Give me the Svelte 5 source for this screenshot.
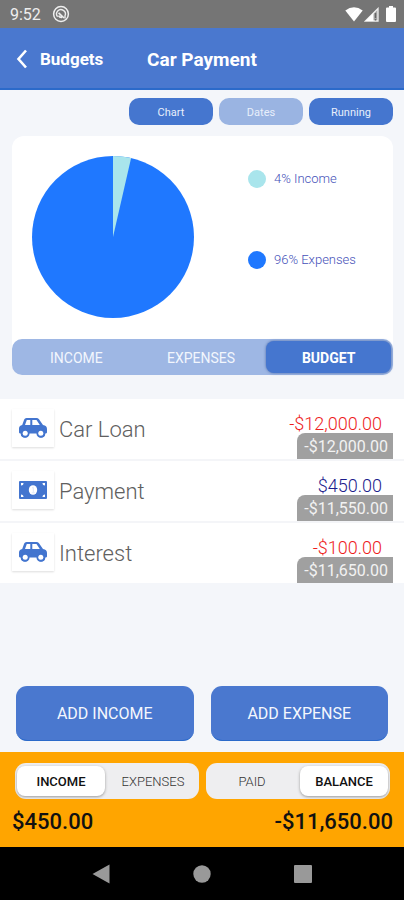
<script lang="ts">
	type Entry = { name: string; icon: 'car' | 'cash'; amount: number; running: number };

	const entries: Entry[] = [
		{ name: 'Car Loan', icon: 'car', amount: -12000, running: -12000 },
		{ name: 'Payment', icon: 'cash', amount: 450, running: -11550 },
		{ name: 'Interest', icon: 'car', amount: -100, running: -11650 }
	];

	const tabs = ['Income', 'Expenses', 'Budget'];
	const totalTabs = ['Income', 'Expenses'];
	const balanceTabs = ['Paid', 'Balance'];

	let showChart = $state(true);
	let showDates = $state(false);
	let showRunning = $state(true);
	let tab = $state('Budget');
	let totalTab = $state('Income');
	let balanceTab = $state('Balance');

	const income = 450;
	const expenses = 12100;
	const share = income / (income + expenses);
	const incomePct = Math.round(share * 100);

	// end of the income slice on the circle
	const angle = share * Math.PI * 2;
	const sliceX = 81 + 81 * Math.sin(angle);
	const sliceY = 81 - 81 * Math.cos(angle);

	let total = $derived(totalTab === 'Income' ? income : -expenses);
	let balance = $derived(balanceTab === 'Balance' ? income - expenses : 0);

	function money(value: number) {
		const text = Math.abs(value).toLocaleString('en-US', { minimumFractionDigits: 2 });
		return (value < 0 ? '-$' : '$') + text;
	}
</script>

<div class="screen">
	<div class="status">
		<span>9:52</span>
		<svg width="18" height="18" viewBox="0 0 18 18" fill="none" stroke="#eee">
			<circle cx="9" cy="9" r="7.4" stroke-width="1.5" />
			<path d="M5.6 11.8A4.4 4.4 0 1 1 13 10.8L13 13.5" stroke-width="1.4" />
			<path d="M6.6 7.8L12 13M6.6 10.6Q7.5 12.6 10 12.4" stroke-width="1.7" />
		</svg>
		<div class="signals">
			<svg width="18" height="15" viewBox="0 0 18 15">
				<path d="M0.3 3.5Q9-3 17.7 3.5L9 14.5Z" fill="#fff" />
			</svg>
			<svg width="15" height="15" viewBox="0 0 15 15">
				<path d="M14 1.5V14H1.5Z" fill="#a5a5a5" stroke="#eee" stroke-width="1.3" />
				<path d="M9.5 6V14H1.5Z" fill="#fff" />
				<path d="M11.5 6V11M11.5 12V13.4" stroke="#666" stroke-width="1.3" />
			</svg>
			<svg class="battery" width="10" height="16" viewBox="0 0 10 16">
				<path d="M3 0H7V1.6H9Q10 1.6 10 2.6V15Q10 16 9 16H1Q0 16 0 15V2.6Q0 1.6 1 1.6H3Z" fill="#fff" />
			</svg>
		</div>
	</div>

	<header>
		<a href="#budgets">
			<svg width="12" height="20" viewBox="0 0 12 20" fill="none" stroke="#fff" stroke-width="2.6">
				<path d="M10 1.5L2.5 10L10 18.5" />
			</svg>
			Budgets
		</a>
		<h1>Car Payment</h1>
	</header>

	<main>
		<div class="toggles">
			<button class:off={!showChart} aria-pressed={showChart} onclick={() => (showChart = !showChart)}>Chart</button>
			<button class:off={!showDates} aria-pressed={showDates} onclick={() => (showDates = !showDates)}>Dates</button>
			<button class:off={!showRunning} aria-pressed={showRunning} onclick={() => (showRunning = !showRunning)}>Running</button>
		</div>

		<section class="card">
			{#if showChart}
				<div class="chart">
					<svg width="162" height="162" viewBox="0 0 162 162">
						<circle cx="81" cy="81" r="81" fill="#1f78ff" />
						<path d="M81 81V0A81 81 0 0 1 {sliceX} {sliceY}Z" fill="#a9e5ec" />
					</svg>
					<ul>
						<li><i class="dot income"></i>{incomePct}% Income</li>
						<li><i class="dot"></i>{100 - incomePct}% Expenses</li>
					</ul>
				</div>
			{/if}
			<div class="tabs">
				{#each tabs as name}
					<button class:active={tab === name} onclick={() => (tab = name)}>{name}</button>
				{/each}
			</div>
		</section>

		<ul class="entries">
			{#each entries as entry}
				<li>
					<span class="icon">
						{#if entry.icon === 'car'}
							<svg width="28" height="20" viewBox="0 0 28 20">
								<path
									fill="#4375cf"
									fill-rule="evenodd"
									d="M7.5 0H17.5Q19 0 20 1.3L24 7Q28 7.5 28 11V14.5Q28 15.5 26.3 15.5A4 4 0 0 1 18.3 15.5H9.7A4 4 0 0 1 1.7 15.5Q0 15.5 0 14.5V10.5Q0 7.5 3.2 7L5.2 1.5Q5.8 0 7.5 0ZM7.8 2L6 7H11.3V2ZM13.3 2V7H20.8L17.5 2Z"
								/>
								<circle cx="6.2" cy="15.5" r="4.3" fill="#4375cf" />
								<circle cx="21.8" cy="15.5" r="4.3" fill="#4375cf" />
								<circle cx="6.2" cy="15.3" r="2.5" fill="#fff" />
								<circle cx="21.8" cy="15.3" r="2.5" fill="#fff" />
							</svg>
						{:else}
							<svg width="28" height="18" viewBox="0 0 28 18">
								<rect width="28" height="18" rx="1" fill="#4375cf" />
								<ellipse cx="14" cy="9" rx="4.2" ry="4.8" fill="#fff" />
								<path
									fill="#fff"
									d="M2 2H4.5A2.5 2.5 0 0 1 2 4.5ZM26 2H23.5A2.5 2.5 0 0 0 26 4.5ZM2 16H4.5A2.5 2.5 0 0 0 2 13.5ZM26 16H23.5A2.5 2.5 0 0 1 26 13.5Z"
								/>
								<path d="M13 7L14.3 6.3V11.5M12.7 11.8H15.8" fill="none" stroke="#dfe8f8" />
							</svg>
						{/if}
					</span>
					<span class="name">{entry.name}</span>
					<span class="amounts">
						<span class="amount" class:negative={entry.amount < 0}>{money(entry.amount)}</span>
						{#if showRunning}
							<span class="running">{money(entry.running)}</span>
						{/if}
					</span>
				</li>
			{/each}
		</ul>
	</main>

	<div class="actions">
		<button>ADD INCOME</button>
		<button>ADD EXPENSE</button>
	</div>

	<footer>
		<div class="switches">
			<div class="switch">
				{#each totalTabs as name}
					<button class:active={totalTab === name} onclick={() => (totalTab = name)}>{name}</button>
				{/each}
			</div>
			<div class="switch">
				{#each balanceTabs as name}
					<button class:active={balanceTab === name} onclick={() => (balanceTab = name)}>{name}</button>
				{/each}
			</div>
		</div>
		<div class="totals">
			<span>{money(total)}</span>
			<span>{money(balance)}</span>
		</div>
	</footer>

	<nav>
		<button aria-label="Back">
			<svg width="18" height="20" viewBox="0 0 18 20"><path d="M17.5 0.5V19.5L0.5 10Z" fill="#999" /></svg>
		</button>
		<button aria-label="Home">
			<svg width="18" height="18" viewBox="0 0 18 18"><circle cx="9" cy="9" r="8.7" fill="#999" /></svg>
		</button>
		<button aria-label="Recent apps">
			<svg width="18" height="18" viewBox="0 0 18 18"><rect width="18" height="18" rx="1" fill="#999" /></svg>
		</button>
	</nav>
</div>

<style>
	:global(body) {
		margin: 0;
		background: #f4f6fa;
	}

	.screen {
		display: flex;
		flex-direction: column;
		min-height: 100vh;
		font-family: Roboto, 'Liberation Sans', sans-serif;
	}

	button {
		padding: 0;
		border: 0;
		background: none;
		font-family: inherit;
		cursor: pointer;
	}

	ul {
		list-style: none;
		margin: 0;
		padding: 0;
	}

	svg {
		display: block;
	}

	.status {
		display: flex;
		align-items: center;
		gap: 11px;
		height: 28px;
		padding: 0 8px 0 10px;
		background: #757575;
		color: #eee;
		font-size: 16px;
	}

	.signals {
		display: flex;
		align-items: center;
		gap: 1px;
		margin-left: auto;
	}

	.battery {
		margin-left: 6px;
	}

	header {
		display: grid;
		grid-template-columns: 1fr auto 1fr;
		align-items: center;
		height: 58px;
		padding: 2px 16px 0;
		border-bottom: 2px solid #2b6aca;
		background: #4a78cf;
		color: #fff;
	}

	header a {
		display: flex;
		align-items: center;
		gap: 12px;
		color: #fff;
		font-size: 17px;
		font-weight: 700;
		text-decoration: none;
	}

	h1 {
		margin: 0;
		font-size: 19px;
		font-weight: 700;
	}

	main {
		flex: 1;
	}

	.toggles {
		display: flex;
		justify-content: flex-end;
		gap: 6px;
		padding: 8px 11px 11px;
	}

	.toggles button {
		width: 84px;
		height: 27px;
		padding-top: 1px;
		border-radius: 10px;
		background: #4576cf;
		color: #e8effb;
		font-size: 11px;
	}

	.toggles button.off {
		background: #9ab4e2;
	}

	.card {
		margin: 0 11px 24px 12px;
		border-radius: 12px;
		background: #fff;
	}

	.chart {
		display: flex;
		align-items: flex-start;
		padding: 20px 20px 21px;
	}

	.chart ul {
		display: grid;
		gap: 61px;
		margin-left: 54px;
		padding-top: 13px;
	}

	.chart li {
		display: flex;
		align-items: center;
		gap: 8px;
		color: #4450b8;
		font-size: 13px;
		font-weight: 300;
		line-height: 20px;
	}

	.dot {
		width: 18px;
		height: 18px;
		border-radius: 50%;
		background: #1f78ff;
	}

	.dot.income {
		background: #a9e5ec;
	}

	.tabs {
		display: flex;
		height: 36px;
		padding: 2px;
		box-sizing: border-box;
		border-radius: 10px;
		background: #9eb7e4;
	}

	.tabs button {
		flex: 1;
		padding-top: 1px;
		border-radius: 8px;
		color: #f2f6fd;
		font-size: 14px;
		text-transform: uppercase;
	}

	.tabs button.active {
		margin-left: 3px;
		background: #4576cf;
		box-shadow: 0 0 3px #4a6aa8;
		color: #fff;
		font-weight: 700;
	}

	.entries {
		background: #fff;
	}

	.entries li {
		display: flex;
		height: 60px;
		padding: 0 11px 0 12px;
		border-bottom: 2px solid #f4f5f8;
	}

	.entries li:last-child {
		border-bottom: 0;
	}

	.icon {
		display: flex;
		align-items: center;
		justify-content: center;
		width: 42px;
		height: 38px;
		margin-top: 10px;
		box-shadow: 0 1px 2px #ddd;
	}

	.name {
		flex: 1;
		padding-left: 5px;
		color: #606060;
		font-size: 22px;
		font-weight: 300;
		line-height: 62px;
	}

	.amounts {
		display: flex;
		flex-direction: column;
		align-items: flex-end;
		justify-content: flex-end;
	}

	.amount {
		padding-right: 11px;
		color: #1c1c8c;
		font-size: 18px;
		font-weight: 300;
		line-height: 18px;
	}

	.amount.negative {
		color: #ee1c1c;
	}

	.running {
		padding: 1px 5px 0 7px;
		border-radius: 8px 0 0 0;
		background: #a0a0a0;
		color: #f2f2f2;
		font-size: 16px;
		line-height: 25px;
	}

	.actions {
		display: flex;
		gap: 17px;
		padding: 11px 16px;
	}

	.actions button {
		flex: 1;
		height: 55px;
		padding-top: 1px;
		border-radius: 11px;
		border-bottom: 1px solid #2b6aca;
		background: #4a78cf;
		color: #f4f7fd;
		font-size: 16px;
	}

	footer {
		background: #ffa500;
		color: #111;
	}

	.switches {
		display: flex;
		gap: 7px;
		padding: 11px 14px 9px 15px;
	}

	.switch {
		display: flex;
		flex: 1;
		gap: 4px;
		height: 36px;
		padding: 3px 2px;
		box-sizing: border-box;
		border-radius: 11px;
		background: #eeeef0;
	}

	.switch button {
		flex: 1;
		padding-top: 1px;
		border-radius: 8px;
		color: #333;
		font-size: 13px;
		font-weight: 300;
		text-transform: uppercase;
	}

	.switch button.active {
		background: #fff;
		box-shadow: 0 1px 3px #999;
		color: #111;
		font-weight: 500;
	}

	.totals {
		display: flex;
		justify-content: space-between;
		padding: 1px 11px 12px 12px;
		font-size: 22px;
		font-weight: 500;
		line-height: 26px;
	}

	nav {
		display: flex;
		justify-content: center;
		gap: 83px;
		height: 53px;
		background: #000;
	}
</style>
